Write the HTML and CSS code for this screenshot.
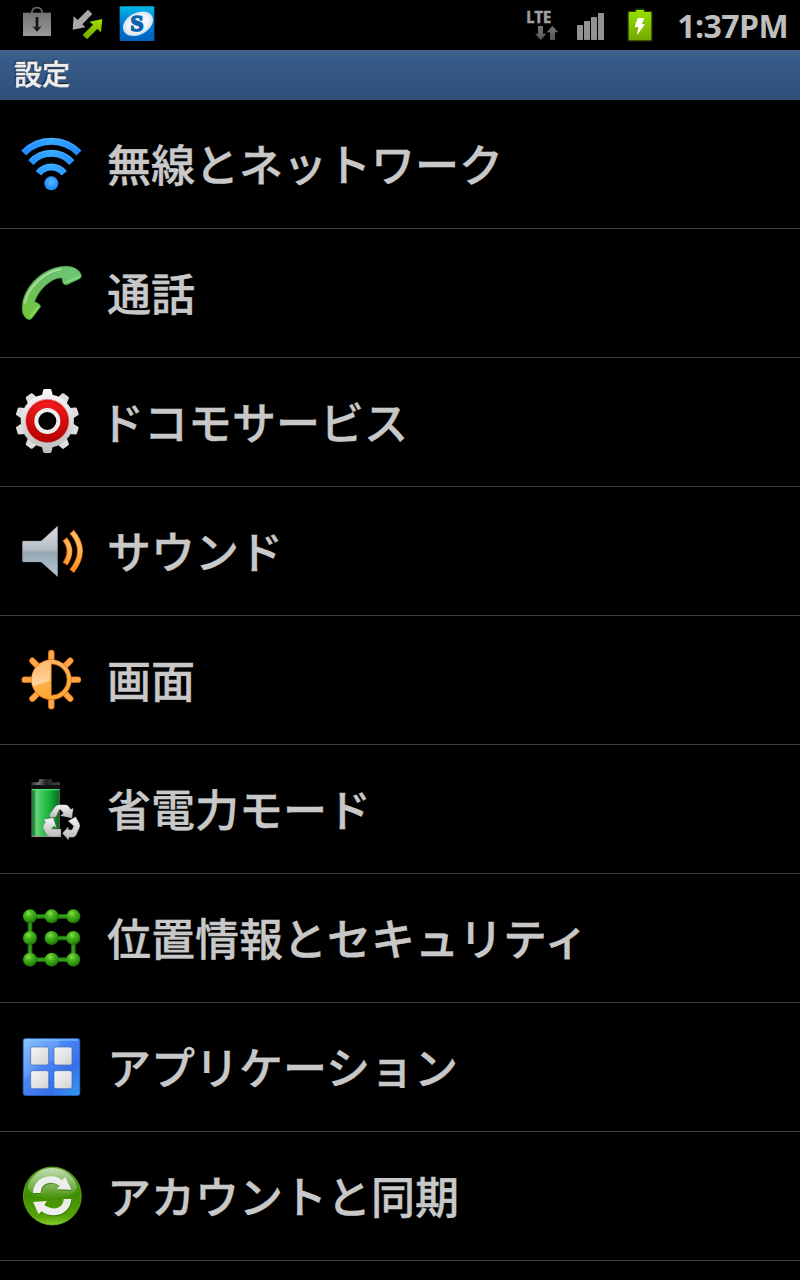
FILE: index.html
```html
<!DOCTYPE html>
<html lang="ja">
<head>
    <meta charset="UTF-8">
    <meta name="viewport" content="width=device-width, initial-scale=1.0">
    <title>設定</title>
    <link rel="stylesheet" href="styles.css">
</head>
<body>
    <div class="status-bar">
        <div class="notifications">
            <svg width="36" height="50" viewBox="57 0 108 150">
                <defs>
                    <linearGradient id="bag" x1="0" y1="0" x2="0" y2="1">
                        <stop offset="0" stop-color="#747474"/>
                        <stop offset="1" stop-color="#999"/>
                    </linearGradient>
                </defs>
                <path d="M95 42c0-12 5-19 16-19s16 7 16 19" fill="none" stroke="#666" stroke-width="5"/>
                <path d="M69 38h84v70H69z" fill="url(#bag)"/>
                <path d="M111 51v32" stroke="#111" stroke-width="8"/>
                <path d="M97 78l14 5 14-5-14 17z" fill="#111"/>
            </svg>
            <svg width="36" height="50" viewBox="207 0 108 150">
                <defs>
                    <linearGradient id="arrow" x1="0" y1="0" x2="0" y2="1">
                        <stop offset="0" stop-color="#a3dc00"/>
                        <stop offset="1" stop-color="#74a800"/>
                    </linearGradient>
                </defs>
                <path d="M264 29l13 13-30 31 9 9-38 7 3-40 12 11z" fill="#a9a9a9"/>
                <path d="M307 57l-4 40-11-10-31 31-13-13 31-31-10-9z" fill="url(#arrow)"/>
            </svg>
            <svg width="36" height="50" viewBox="357 0 108 150">
                <defs>
                    <linearGradient id="logo" x1="0" y1="0" x2="0" y2="1">
                        <stop offset="0" stop-color="#00b9e6"/>
                        <stop offset=".5" stop-color="#0079d2"/>
                        <stop offset="1" stop-color="#0063c0"/>
                    </linearGradient>
                    <radialGradient id="oval">
                        <stop offset=".7" stop-color="#f2f6fa"/>
                        <stop offset="1" stop-color="#c9dcec"/>
                    </radialGradient>
                </defs>
                <rect x="359" y="19" width="104" height="104" rx="3" fill="url(#logo)"/>
                <ellipse cx="414" cy="71" rx="48" ry="33" fill="url(#oval)" transform="rotate(-28 414 71)"/>
                <text x="411" y="94" class="logo-letter">S</text>
            </svg>
        </div>
        <div class="system">
            <svg width="36" height="50" viewBox="72 0 108 150">
                <defs>
                    <linearGradient id="lteArrow" x1="0" y1="0" x2="0" y2="1">
                        <stop offset="0" stop-color="#747474"/>
                        <stop offset="1" stop-color="#555"/>
                    </linearGradient>
                </defs>
                <text x="79" y="69" class="lte" textLength="75" lengthAdjust="spacingAndGlyphs">LTE</text>
                <path d="M114 78h15v23h10l-17 19-17-19h9zM150 120h15V97h10l-18-19-17 19h10z" fill="url(#lteArrow)"/>
            </svg>
            <svg width="32" height="50" viewBox="228 0 96 150">
                <g fill="#929292">
                    <rect x="231" y="75" width="18" height="45" rx="2"/>
                    <rect x="252" y="63" width="18" height="57" rx="2"/>
                    <rect x="273" y="51" width="18" height="69" rx="2"/>
                    <rect x="294" y="39" width="18" height="81" rx="2"/>
                </g>
            </svg>
            <svg width="32" height="50" viewBox="372 0 96 150">
                <defs>
                    <linearGradient id="charge" x1="0" y1="0" x2="0" y2="1">
                        <stop offset="0" stop-color="#97e000"/>
                        <stop offset="1" stop-color="#75a800"/>
                    </linearGradient>
                </defs>
                <path d="M407 29h25v7h22v85h-68V36h21z" fill="none" stroke="#4d7a00" stroke-opacity=".45" stroke-width="7" stroke-linejoin="round"/>
                <path d="M408 30h24v6h19q3 0 3 3v79q0 3-3 3h-62q-3 0-3-3V39q0-3 3-3h19z" fill="url(#charge)"/>
                <path d="M413 54h20l-8 19h10l-24 33 4-25h-11z" fill="#fff"/>
            </svg>
            <span class="clock">1:37PM</span>
        </div>
    </div>

    <h1 class="title-bar">設定</h1>

    <ul class="settings">
        <li>
            <svg class="icon" viewBox="45 24 216 216">
                <defs>
                    <linearGradient id="wifi" gradientUnits="userSpaceOnUse" x1="65" y1="0" x2="243" y2="0">
                        <stop offset="0" stop-color="#1e86ff"/>
                        <stop offset=".5" stop-color="#35a8ff"/>
                        <stop offset="1" stop-color="#1e86ff"/>
                    </linearGradient>
                    <radialGradient id="wifiDot" cx=".5" cy=".4">
                        <stop offset="0" stop-color="#5bb6ff"/>
                        <stop offset="1" stop-color="#1c8dff"/>
                    </radialGradient>
                </defs>
                <g fill="none" stroke="url(#wifi)">
                    <path d="M71 99A116 116 0 0 1 237 99" stroke-width="21"/>
                    <path d="M92.500 128A81.500 81.500 0 0 1 215.500 128" stroke-width="21"/>
                    <path d="M115.500 160A48.500 48.500 0 0 1 192.500 160" stroke-width="21"/>
                </g>
                <g fill="none" stroke="#62bcff" stroke-opacity=".5" stroke-width="3">
                    <path d="M68 92A121 121 0 0 1 240 92"/>
                    <path d="M89 120A88 88 0 0 1 219 120"/>
                    <path d="M112 152A56 56 0 0 1 196 152"/>
                </g>
                <circle cx="154" cy="190" r="21" fill="url(#wifiDot)"/>
            </svg>
            <span>無線とネットワーク</span>
        </li>
        <li>
            <svg class="icon" viewBox="45 21 216 216">
                <defs>
                    <linearGradient id="phone" x1="1" y1="0" x2="0" y2="1">
                        <stop offset="0" stop-color="#6cc878"/>
                        <stop offset=".5" stop-color="#6abd63"/>
                        <stop offset="1" stop-color="#74c936"/>
                    </linearGradient>
                </defs>
                <path d="M67 170C68 112 130 50 196 49C224 48 242 64 244 77Q244 83 239 86L201 104Q190 106 188 97L186 84C158 80 116 118 104 155Q120 160 122 170L96 205Q87 213 79 205C68 195 66 184 67 170Z" fill="url(#phone)" stroke="#4b9c43" stroke-width="2"/>
                <path d="M75 158C84 113 132 65 182 58" fill="none" stroke="#c6edbd" stroke-opacity=".65" stroke-width="6" stroke-linecap="round"/>
                <path d="M196 97l43-17M91 200l24-30" fill="none" stroke="#9bec86" stroke-opacity=".6" stroke-width="5" stroke-linecap="round"/>
            </svg>
            <span>通話</span>
        </li>
        <li class="docomo">
            <svg class="icon" viewBox="45 408 216 216">
                <defs>
                    <linearGradient id="gear" gradientUnits="userSpaceOnUse" x1="0" y1="417" x2="0" y2="609">
                        <stop offset="0" stop-color="#fafafa"/>
                        <stop offset="1" stop-color="#bdbdbd"/>
                    </linearGradient>
                    <linearGradient id="red" x1="0" y1="0" x2="0" y2="1">
                        <stop offset="0" stop-color="#f51d20"/>
                        <stop offset="1" stop-color="#b50000"/>
                    </linearGradient>
                    <path id="teeth" d="M130 419q1-2 4-2h16q3 0 4 2l5 20v149l-5 19q-1 2-4 2h-16q-3 0-4-2l-5-19V439z"/>
                </defs>
                <g fill="#dedede">
                    <use href="#teeth" fill="url(#gear)"/>
                    <use href="#teeth" transform="rotate(36 142 513)"/>
                    <use href="#teeth" transform="rotate(72 142 513)"/>
                    <use href="#teeth" transform="rotate(108 142 513)"/>
                    <use href="#teeth" transform="rotate(144 142 513)"/>
                </g>
                <circle cx="142" cy="513" r="80" fill="url(#gear)"/>
                <circle cx="142" cy="513" r="65" fill="url(#red)" stroke="#d99a9a" stroke-width="2"/>
                <circle cx="142" cy="513" r="60" fill="none" stroke="#a80000" stroke-opacity=".4" stroke-width="3"/>
                <circle cx="142" cy="513" r="33" fill="#000" stroke="#eee" stroke-width="12"/>
            </svg>
            <span>ドコモサービス</span>
        </li>
        <li>
            <svg class="icon" viewBox="45 15 216 216">
                <defs>
                    <linearGradient id="cone" x1="0" y1="0" x2="0" y2="1">
                        <stop offset="0" stop-color="#dadcdf"/>
                        <stop offset=".46" stop-color="#b4bec6"/>
                        <stop offset=".52" stop-color="#97a8b5"/>
                        <stop offset="1" stop-color="#b4c6d4"/>
                    </linearGradient>
                    <linearGradient id="wave" gradientUnits="userSpaceOnUse" x1="0" y1="60" x2="0" y2="188">
                        <stop offset="0" stop-color="#ffbd73"/>
                        <stop offset=".5" stop-color="#ffb54c"/>
                        <stop offset="1" stop-color="#ff8a18"/>
                    </linearGradient>
                </defs>
                <path d="M71 93h50q3 0 6-3l46-42v152l-46-41q-3-3-6-3H71q-4 0-4-4V97q0-4 4-4z" fill="url(#cone)" stroke="#7d8890" stroke-width="1"/>
                <g fill="none">
                    <path d="M194 87Q222 122 195 162M215 65Q265 122 215 184" stroke="#e46a12" stroke-width="17"/>
                    <path d="M196 89Q222 122 197 160M217 67Q264 122 217 182" stroke="url(#wave)" stroke-width="12"/>
                </g>
            </svg>
            <span>サウンド</span>
        </li>
        <li>
            <svg class="icon" viewBox="45 402 216 216">
                <defs>
                    <linearGradient id="sun" x1="0" y1="0" x2="0" y2="1">
                        <stop offset="0" stop-color="#ffb163"/>
                        <stop offset="1" stop-color="#ffa62f"/>
                    </linearGradient>
                    <linearGradient id="sunFace" gradientUnits="userSpaceOnUse" x1="110" y1="455" x2="145" y2="565">
                        <stop offset="0" stop-color="#ffb669"/>
                        <stop offset=".56" stop-color="#ffd29c"/>
                        <stop offset=".6" stop-color="#ffb04a"/>
                        <stop offset="1" stop-color="#ffa22e"/>
                    </linearGradient>
                </defs>
                <g stroke-linecap="round">
                    <path d="M154 429v160M74 509h160M97 452l114 114M211 452L97 566" stroke="#d9701a" stroke-width="19"/>
                    <path d="M154 429v160M74 509h160M97 452l114 114M211 452L97 566" stroke="#ffa646" stroke-width="15"/>
                </g>
                <circle cx="154" cy="509" r="61" fill="#d9701a"/>
                <circle cx="154" cy="509" r="59" fill="url(#sun)"/>
                <path d="M154 462a47 47 0 0 1 0 94z" fill="#000" stroke="#bd6218" stroke-width="2"/>
                <path d="M151 453a56 56 0 0 0 0 112z" fill="url(#sunFace)"/>
            </svg>
            <span>画面</span>
        </li>
        <li>
            <svg class="icon" viewBox="45 24 216 216">
                <defs>
                    <linearGradient id="cell">
                        <stop offset="0" stop-color="#5a6a5c"/>
                        <stop offset=".08" stop-color="#138a32"/>
                        <stop offset=".18" stop-color="#6fcf80"/>
                        <stop offset=".35" stop-color="#3ccb58"/>
                        <stop offset=".65" stop-color="#16ae3c"/>
                        <stop offset=".92" stop-color="#087522"/>
                        <stop offset="1" stop-color="#4a574b"/>
                    </linearGradient>
                    <linearGradient id="cap">
                        <stop offset="0" stop-color="#333"/>
                        <stop offset=".25" stop-color="#777"/>
                        <stop offset=".5" stop-color="#222"/>
                        <stop offset="1" stop-color="#444"/>
                    </linearGradient>
                    <linearGradient id="recycle" x1="0" y1="0" x2="0" y2="1">
                        <stop offset="0" stop-color="#f4f4f4"/>
                        <stop offset="1" stop-color="#b8b8b8"/>
                    </linearGradient>
                </defs>
                <path d="M118 42h36l2 10h22q2 0 2 3v17H94V55q0-3 2-3h20z" fill="url(#cap)"/>
                <path d="M94 60h86v12H94z" fill="#111"/>
                <path d="M94 72h86v144H94z" fill="url(#cell)"/>
                <path d="M96 74h82" stroke="#50f078" stroke-width="3"/>
                <path d="M96 214h82" stroke="#999" stroke-width="3"/>
                <g fill="url(#recycle)" stroke="#444" stroke-width="1">
                    <path d="M148 149l17-24q5-6 13-6h18q7 0 11 6l5 8 8-4-4 31-35-8 9-7-7-9q-3-5-6 0l-9 20-17 3z"/>
                    <path d="M130 163l30-5 10 30-9-4-6 8h28v24h-31q-8 0-12-6l-10-18q-3-6 0-11l6-10z"/>
                    <path d="M204 168l23-13 11 20q4 8 0 15l-9 20q-3 7-12 7h-10l-1 9-19-21 18-20v9h11l5-11z"/>
                </g>
            </svg>
            <span>省電力モード</span>
        </li>
        <li>
            <svg class="icon" viewBox="45 411 216 216">
                <defs>
                    <radialGradient id="node" cx=".4" cy=".3" r=".7">
                        <stop offset="0" stop-color="#8be04e"/>
                        <stop offset=".35" stop-color="#49b81c"/>
                        <stop offset=".75" stop-color="#2c930f"/>
                        <stop offset="1" stop-color="#1b6a08"/>
                    </radialGradient>
                    <circle id="dot" r="21" fill="url(#node)"/>
                </defs>
                <g fill="none">
                    <path d="M220 454H90v130h130v-65h-65" stroke="#1d6a0c" stroke-width="14"/>
                    <path d="M220 454H90v130h130v-65h-65" stroke="#339a1a" stroke-width="8"/>
                </g>
                <use href="#dot" x="90" y="454"/>
                <use href="#dot" x="155" y="454"/>
                <use href="#dot" x="220" y="454"/>
                <use href="#dot" x="90" y="519"/>
                <use href="#dot" x="155" y="519"/>
                <use href="#dot" x="220" y="519"/>
                <use href="#dot" x="90" y="584"/>
                <use href="#dot" x="155" y="584"/>
                <use href="#dot" x="220" y="584"/>
            </svg>
            <span>位置情報とセキュリティ</span>
        </li>
        <li>
            <svg class="icon" viewBox="45 33 216 216">
                <defs>
                    <linearGradient id="tile" x1="0" y1="0" x2="1" y2="1">
                        <stop offset="0" stop-color="#7dbcff"/>
                        <stop offset=".4" stop-color="#4a86f5"/>
                        <stop offset=".7" stop-color="#3670ea"/>
                        <stop offset="1" stop-color="#2d9cf0"/>
                    </linearGradient>
                    <linearGradient id="pane" x1="0" y1="0" x2="1" y2="1">
                        <stop offset="0" stop-color="#f7f7f7"/>
                        <stop offset="1" stop-color="#d2d2d2"/>
                    </linearGradient>
                </defs>
                <rect x="69.500" y="55.500" width="170" height="171" rx="7" fill="url(#tile)" stroke="#2d62c8" stroke-width="2"/>
                <path d="M74 59h108l-18 60q-50 12-92 60V62z" fill="#fff" fill-opacity=".1"/>
                <path d="M76 60h157" stroke="#7ed3ff" stroke-width="3"/>
                <g fill="url(#pane)" stroke="#3d69b5" stroke-width="2">
                    <rect x="92" y="81" width="54" height="54" rx="6"/>
                    <rect x="162" y="81" width="54" height="54" rx="6"/>
                    <rect x="92" y="152" width="54" height="54" rx="6"/>
                    <rect x="162" y="152" width="54" height="54" rx="6"/>
                </g>
            </svg>
            <span>アプリケーション</span>
        </li>
        <li>
            <svg class="icon" viewBox="45 420 216 216">
                <defs>
                    <linearGradient id="ball" x1="0" y1="0" x2="0" y2="1">
                        <stop offset="0" stop-color="#4f9f20"/>
                        <stop offset=".5" stop-color="#418f00"/>
                        <stop offset=".85" stop-color="#55a305"/>
                        <stop offset="1" stop-color="#83cf2c"/>
                    </linearGradient>
                    <linearGradient id="gloss" x1="0" y1="0" x2="0" y2="1">
                        <stop offset="0" stop-color="#fff" stop-opacity=".65"/>
                        <stop offset="1" stop-color="#fff" stop-opacity=".05"/>
                    </linearGradient>
                    <g id="sync">
                        <path d="M99 519c2-30 23-50 54-50 14 0 24 4 33 12l10-10 19 38-44-1 8-10c-26-19-56-9-57 21z"/>
                        <path d="M214 537c-2 29-24 49-54 49-14 0-26-4-35-12l-9 9-17-37 42-3-8 12c27 19 57 11 58-18z"/>
                    </g>
                </defs>
                <circle cx="157" cy="528" r="87" fill="url(#ball)" stroke="#6fba2b" stroke-width="2"/>
                <path d="M83 500C93 465 122 444 157 444s64 21 74 56c-2 23-38 34-74 34s-72-11-74-34z" fill="url(#gloss)"/>
                <use href="#sync" x="2" y="3" fill="#2c6a00" fill-opacity=".6"/>
                <use href="#sync" fill="#eee"/>
            </svg>
            <span>アカウントと同期</span>
        </li>
    </ul>
</body>
</html>
```

FILE: styles.css
```css
body {
    margin: 0;
    height: 1280px;
    overflow: hidden;
    background-color: #000;
    color: #c8c8c8;
    font-family: "Noto Sans CJK JP", sans-serif;
}
svg {
    display: block;
    flex: none;
}
.status-bar {
    display: flex;
    justify-content: space-between;
    height: 50px;
    padding: 0 12px 0 19px;
}
.notifications {
    display: flex;
    gap: 14px;
}
.system {
    display: flex;
    gap: 16px;
}
.clock {
    width: 116px;
    font-family: "Open Sans", sans-serif;
    font-size: 32px;
    font-weight: bold;
    letter-spacing: -0.6px;
    line-height: 51px;
    text-align: right;
    white-space: nowrap;
    color: #bebebe;
}
.lte {
    font-family: "Open Sans", sans-serif;
    font-size: 50px;
    font-weight: bold;
    fill: #a0a0a0;
    stroke: #a0a0a0;
    stroke-width: 2px;
}
.logo-letter {
    font-family: "Liberation Serif", serif;
    font-size: 70px;
    font-weight: bold;
    text-anchor: middle;
    fill: #0b63b0;
    stroke: #0b63b0;
    stroke-width: 5px;
}
.title-bar {
    height: 50px;
    margin: 0;
    padding-left: 14px;
    background: linear-gradient(#41658f, #375b89 20%, #2f4f78);
    color: #eee;
    font-size: 28px;
    font-weight: 500;
    line-height: 47px;
    text-shadow: -1px -1px 1px #111;
    -webkit-text-stroke: 0.4px #eee;
}
.settings {
    list-style: none;
    margin: 0;
    padding: 0;
}
.settings li {
    display: flex;
    align-items: center;
    gap: 20px;
    height: 128px;
    padding-left: 15px;
    border-bottom: 1px solid #414141;
    font-size: 44px;
    font-weight: 500;
    white-space: nowrap;
    -webkit-text-stroke: 0.4px #c8c8c8;
}
.settings span {
    padding-bottom: 2px;
}
.settings .docomo {
    gap: 13px;
}
.icon {
    width: 72px;
    height: 72px;
}
```
